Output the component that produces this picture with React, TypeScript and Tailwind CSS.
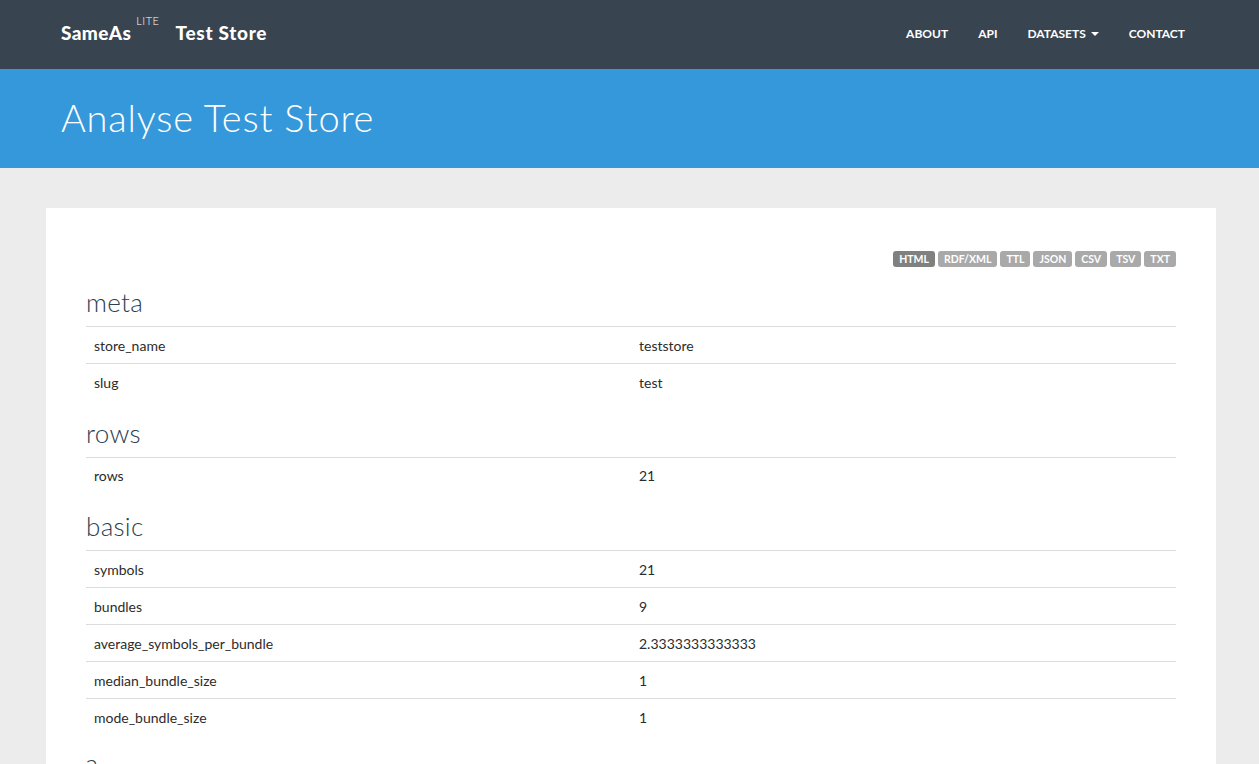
import React from "react";

type Row = [string, string];

const sections: { title: string; rows: Row[] }[] = [
  {
    title: "meta",
    rows: [
      ["store_name", "teststore"],
      ["slug", "test"],
    ],
  },
  { title: "rows", rows: [["rows", "21"]] },
  {
    title: "basic",
    rows: [
      ["symbols", "21"],
      ["bundles", "9"],
      ["average_symbols_per_bundle", "2.3333333333333"],
      ["median_bundle_size", "1"],
      ["mode_bundle_size", "1"],
    ],
  },
  { title: "?", rows: [] },
];

const formats = ["HTML", "RDF/XML", "TTL", "JSON", "CSV", "TSV", "TXT"];

const Navbar = () => (
  <nav className="h-[69px] bg-[#38444f] flex items-center justify-between pl-[61px] pr-[74px]">
    <div className="flex items-center text-white -mt-[2px]">
      <span className="text-[19px] font-black tracking-[0.4px]">SameAs</span>
      <sup className="text-[11px] font-light ml-[5px] -mt-[14px] tracking-[0.5px]">LITE</sup>
      <span className="text-[19px] font-black ml-[16px] tracking-[0.7px]">Test Store</span>
    </div>
    <ul className="flex items-center text-white text-[12px] font-bold gap-[30px] -mt-[2px]">
      <li>ABOUT</li>
      <li>API</li>
      <li className="flex items-center">
        DATASETS
        <span className="ml-[5px] inline-block w-0 h-0 border-l-[4px] border-r-[4px] border-t-[4px] border-l-transparent border-r-transparent border-t-white" />
      </li>
      <li>CONTACT</li>
    </ul>
  </nav>
);

const Section = ({ title, rows }: { title: string; rows: Row[] }) => (
  <div>
    <h3 className="text-[26px] font-light leading-[28px] mt-[18px] mb-[10px] text-[#2c3e50] tracking-[0.3px]">
      {title}
    </h3>
    {rows.length > 0 && (
      <table className="w-full table-fixed text-[14px] text-[#2c2c2c]">
        <tbody>
          {rows.map(([k, v]) => (
            <tr key={k} className="border-t border-[#dddddd] h-[37px]">
              <td className="px-[8px] align-middle">{k}</td>
              <td className="px-[8px] align-middle">{v}</td>
            </tr>
          ))}
        </tbody>
      </table>
    )}
  </div>
);

export default function App() {
  return (
    <div className="min-h-[764px] bg-[#ececec]" style={{ fontFamily: "Lato, 'Open Sans', sans-serif" }}>
      <Navbar />
      <header className="h-[99px] bg-[#3498db] flex items-center px-[61px]">
        <h1 className="text-white text-[38px] font-light tracking-[0.8px] -mt-[2px]">Analyse Test Store</h1>
      </header>
      <main className="pt-[40px] pl-[46px] pr-[43px]">
        <div className="bg-white px-[40px] pt-[43px] pb-[40px] overflow-hidden h-[556px]">
          <div className="flex justify-end gap-[3px]">
            {formats.map((f, i) => (
              <span
                key={f}
                className={`text-white text-[10.5px] font-bold leading-[16px] h-[16px] px-[6px] rounded-[3px] ${
                  i === 0 ? "bg-[#808080]" : "bg-[#a9a9a9]"
                }`}
              >
                {f}
              </span>
            ))}
          </div>
          <div className="pt-[3px]">
            {sections.map((s) => (
              <Section key={s.title} title={s.title} rows={s.rows} />
            ))}
          </div>
        </div>
      </main>
    </div>
  );
}
